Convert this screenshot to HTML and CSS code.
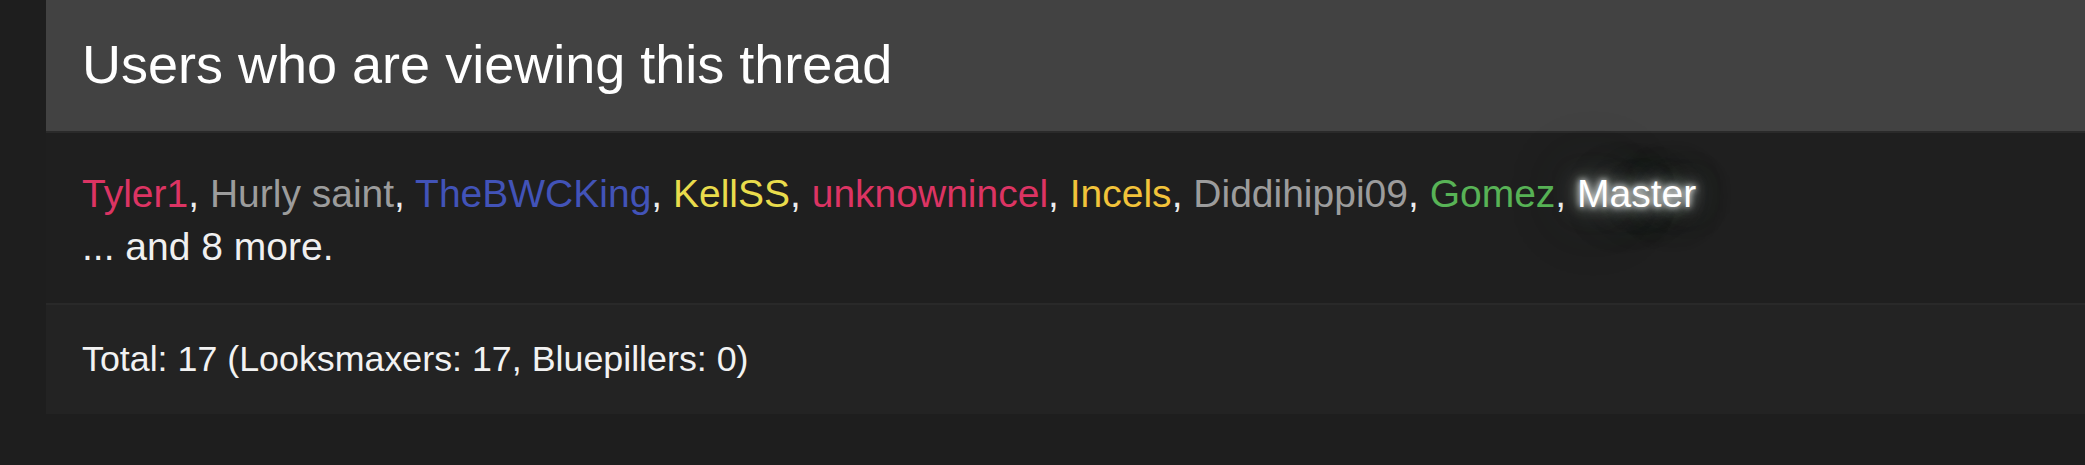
FILE: index.html
```html
<!DOCTYPE html>
<html>
<head>
<meta charset="utf-8">
<link rel="stylesheet" href="styles.css">
</head>
<body>
<section class="block">
  <h3 class="block-header">Users who are viewing this thread</h3>
  <div class="block-body">
    <div class="user-list"><a class="u u-red">Tyler1</a>, <a class="u u-gray">Hurly saint</a>, <a class="u u-blue">TheBWCKing</a>, <a class="u u-yellow">KellSS</a>, <a class="u u-red">unknownincel</a>, <a class="u u-gold">Incels</a>, <a class="u u-gray">Diddihippi09</a>, <a class="u u-green">Gomez</a>, <a class="u u-glow">Master</a></div>
    <div class="more">... and 8 more.</div>
  </div>
  <div class="block-footer">Total: 17 (Looksmaxers: 17, Bluepillers: 0)</div>
</section>
</body>
</html>
```
FILE: styles.css
```css
html, body {
  margin: 0;
  padding: 0;
  background: #1e1e1e;
  font-family: "Liberation Sans", Arial, sans-serif;
  color: #ececec;
}

.block {
  margin-left: 46px;
}

.block-header {
  margin: 0;
  background: #424242;
  color: #ffffff;
  font-weight: normal;
  font-size: 54px;
  line-height: 62px;
  padding: 33px 36px 36px;
  border-bottom: 2px solid #2a2a2a;
}

.block-body {
  background: #1f1f1f;
  padding: 34px 36px 30px;
  font-size: 39px;
  line-height: 53px;
}

.u {
  text-decoration: none;
}

.u-red { color: #dc3463; }
.u-gray { color: #9c9c9c; }
.u-blue { color: #4253b8; }
.u-yellow { color: #e9dc4c; }
.u-gold { color: #f2c33a; }
.u-green { color: #58b356; }
.u-glow {
  color: #ffffff;
  text-shadow: 0 0 6px rgba(255, 255, 255, 0.95), 0 0 14px rgba(240, 250, 245, 0.8), 0 0 26px rgba(200, 220, 212, 0.55), 0 0 60px rgba(120, 160, 145, 0.4), 0 0 120px rgba(80, 115, 105, 0.35);
}

.more {
  color: #f0f0f0;
}

.block-footer {
  background: #232323;
  border-top: 2px solid #292929;
  padding: 34px 36px 34px;
  font-size: 35.8px;
  line-height: 41px;
  color: #f2f2f2;
}
```
